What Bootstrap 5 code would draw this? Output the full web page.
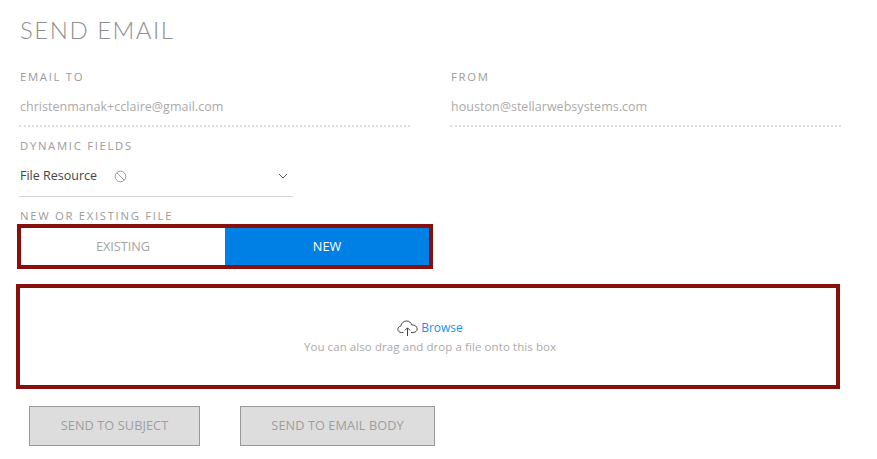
<!DOCTYPE html>
<html lang="en">
<head>
<meta charset="utf-8">
<title>Send Email</title>
<link rel="stylesheet" href="https://cdn.jsdelivr.net/npm/bootstrap@5.3.0/dist/css/bootstrap.min.css">
<style>
html,body{background:#fff;overflow:hidden}
body{font-family:"Open Sans","Noto Sans",sans-serif;font-size:12px;color:#9b9b9b;height:459px}
.sheet{padding:18px 0 0 16px;width:877px}
.page-title{font-family:Lato,sans-serif;font-weight:300;font-size:24px;line-height:24px;letter-spacing:1.5px;color:#8f8f8f;margin:0 0 0 4px;height:52px}
.field-grid{gap:40px;margin-left:3px}
.field-cell{width:391px}
.field-label{font-size:11.3px;line-height:14px;letter-spacing:1.7px;color:#9b9b9b;margin:0 0 0 1px;display:block;height:14px}
.field-value{font-size:12.5px;line-height:16px;color:#aaa;padding:15px 0 11px 1px;border-bottom:2px dotted #ddd;height:43px;letter-spacing:.03px}
.select-box{width:274px;height:43px;margin-top:1px;border-bottom:1px solid #d5d5d5;padding:2px 5px 0 1px;color:#444;font-size:12.5px}
.block-icon{margin-left:17px}
.label-gap{margin-top:12px}
.toggle-box{width:416px;height:45px;border:4px solid #870f0c;margin:1px 0 0 1px}
.toggle-opt{flex:1 1 50%;font-size:12.7px;color:#a3a3a3;text-align:center}
.toggle-opt.is-on{background:#0080e4;color:#fff}
.drop-box{width:824px;height:105px;border:4px solid #870f0c;margin-top:15px;padding-left:4px;text-align:center}
.browse-line{font-size:12px;line-height:16px;color:#1790f3;margin-top:1px}
.browse-line svg{margin-right:3px}
.drop-hint{font-size:11.5px;line-height:16px;color:#aaa;margin-top:3px;letter-spacing:.08px}
.action-row{gap:40px;margin:17px 0 0 13px}
.action-btn{height:40px;background:#ddd;border:1px solid #999;border-radius:0;color:#9d9d9d;font-size:12.7px;padding:0;letter-spacing:.1px}
.action-btn.w-one{width:171px}
.action-btn.w-two{width:195px}
</style>
</head>
<body>
<div class="sheet">
  <h1 class="page-title">SEND EMAIL</h1>
  <div class="d-flex field-grid">
    <div class="field-cell">
      <span class="field-label">EMAIL TO</span>
      <div class="field-value">christenmanak+cclaire@gmail.com</div>
    </div>
    <div class="field-cell">
      <span class="field-label">FROM</span>
      <div class="field-value">houston@stellarwebsystems.com</div>
    </div>
  </div>
  <div style="margin-left:3px">
    <span class="field-label" style="margin-top:12px">DYNAMIC FIELDS</span>
    <div class="select-box d-flex align-items-center justify-content-between">
      <span class="d-flex align-items-center">File Resource
        <svg class="block-icon" width="13" height="13" viewBox="0 0 13 13" fill="none" stroke="#999" stroke-width="1"><circle cx="6.5" cy="6.5" r="5.3"/><path d="M2.8 2.8l7.4 7.4"/></svg>
      </span>
      <svg width="10" height="6" viewBox="0 0 10 6" fill="none" stroke="#555" stroke-width="1"><path d="M1 1l4 4 4-4"/></svg>
    </div>
    <span class="field-label label-gap">NEW OR EXISTING FILE</span>
  </div>
  <div class="toggle-box d-flex">
    <div class="toggle-opt d-flex align-items-center justify-content-center">EXISTING</div>
    <div class="toggle-opt is-on d-flex align-items-center justify-content-center">NEW</div>
  </div>
  <div class="drop-box d-flex flex-column justify-content-center">
    <div class="browse-line d-flex align-items-center justify-content-center">
      <svg width="21" height="16" viewBox="0 0 21 16" fill="none" stroke="#444" stroke-width="1"><path d="M6.5 12.5H4.500C2.300 12.500.8 11.100.8 9.300c0-1.700 1.300-3 3-3.200C4.300 3.200 6.600 1 9.500 1c2.600 0 4.600 1.600 5.200 3.900 2.900-.2 5.500 1.500 5.500 4 0 2.100-1.900 3.600-4 3.600h-2.200"/><path d="M10.500 16V8M7.800 10.500l2.700-2.700 2.700 2.700"/></svg>
      <span>Browse</span>
    </div>
    <div class="drop-hint">You can also drag and drop a file onto this box</div>
  </div>
  <div class="d-flex action-row">
    <button type="button" class="btn action-btn w-one">SEND TO SUBJECT</button>
    <button type="button" class="btn action-btn w-two">SEND TO EMAIL BODY</button>
  </div>
</div>
<script src="https://cdn.jsdelivr.net/npm/bootstrap@5.3.0/dist/js/bootstrap.bundle.min.js"></script>
</body>
</html>
